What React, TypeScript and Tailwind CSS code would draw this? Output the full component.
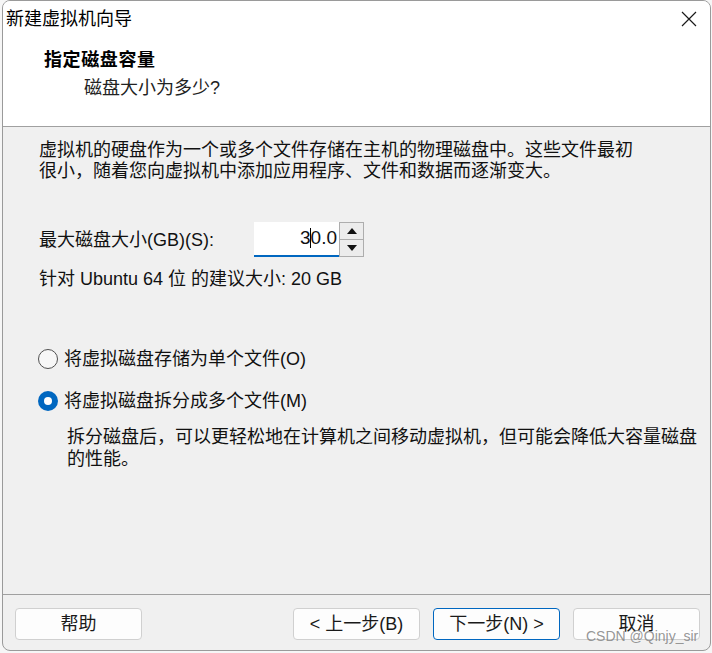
import React from "react";

const font = { fontFamily: '"Liberation Sans", "Noto Sans CJK SC", sans-serif' };

function Radio({ checked }: { checked: boolean }) {
  if (checked) {
    return (
      <div className="w-[20px] h-[20px] rounded-full bg-[#0067c0] flex items-center justify-center shrink-0">
        <div className="w-[8px] h-[8px] rounded-full bg-white" />
      </div>
    );
  }
  return <div className="w-[20px] h-[20px] rounded-full border border-[#505050] bg-[#f7f7f7] shrink-0" />;
}

function Btn({ children, focus }: { children: React.ReactNode; focus?: boolean }) {
  return (
    <div
      className={
        "w-[127px] h-[32px] rounded-[4px] bg-[#fdfdfd] flex items-center justify-center text-[18px] text-[#1a1a1a] border " +
        (focus ? "border-[#0067c0]" : "border-[#d0d0d0]")
      }
    >
      {children}
    </div>
  );
}

export default function App() {
  return (
    <div className="w-[712px] h-[653px] bg-[#f6f6f6] relative overflow-hidden" style={font}>
      <div className="ml-[2px] w-[709px] h-[651px] border border-[#9a9a9a] rounded-[8px] overflow-hidden bg-[#f0f0f0] flex flex-col">
        {/* header */}
        <div className="h-[126px] bg-white border-b border-[#a0a0a0] shrink-0">
          <div className="h-[35px] flex items-center justify-between pl-[3px] pr-[13px]">
            <span className="text-[18px] text-black leading-none">新建虚拟机向导</span>
            <svg width="16" height="16" viewBox="0 0 16 16" className="mt-[1px]">
              <path d="M1 1L15 15M15 1L1 15" stroke="#1a1a1a" strokeWidth="1.2" />
            </svg>
          </div>
          <div className="mt-[12px] ml-[41px] h-[24px] leading-[24px] text-[18px] font-bold text-black tracking-[0.6px]">
            指定磁盘容量
          </div>
          <div className="mt-[4px] ml-[81px] h-[24px] leading-[24px] text-[18px] text-[#222]">磁盘大小为多少?</div>
        </div>

        {/* body */}
        <div className="flex-1 pt-[13px] pl-[36px] text-[18px] text-[#111]">
          <div className="leading-[21px] whitespace-nowrap">
            虚拟机的硬盘作为一个或多个文件存储在主机的物理磁盘中。这些文件最初
            <br />
            很小，随着您向虚拟机中添加应用程序、文件和数据而逐渐变大。
          </div>

          <div className="mt-[40px] h-[35px] flex items-center">
            <div className="w-[215px] leading-none">最大磁盘大小(GB)(S):</div>
            <div className="w-[85px] h-[35px] bg-white border-b-2 border-[#0067c0] flex items-center justify-end pr-[2px] relative">
              <span className="text-[19px] leading-none">
                3<span className="inline-block w-[1px] h-[20px] bg-black align-middle -mx-[0.5px] mb-[2px]" />0.0
              </span>
            </div>
            <div className="w-[25px] h-[35px] flex flex-col border border-[#adadad] bg-[#ececec]">
              <div className="flex-1 flex items-center justify-center border-b border-[#adadad]">
                <svg width="10" height="6" viewBox="0 0 10 6">
                  <path d="M0 6L5 0L10 6Z" fill="#111" />
                </svg>
              </div>
              <div className="flex-1 flex items-center justify-center">
                <svg width="10" height="6" viewBox="0 0 10 6">
                  <path d="M0 0L10 0L5 6Z" fill="#111" />
                </svg>
              </div>
            </div>
          </div>

          <div className="mt-[12px] leading-[21px]">针对 Ubuntu 64 位 的建议大小: 20 GB</div>

          <div className="mt-[57px] h-[24px] flex items-center gap-[6px] -ml-[1px]">
            <Radio checked={false} />
            <span className="leading-none">将虚拟磁盘存储为单个文件(O)</span>
          </div>
          <div className="mt-[18px] h-[24px] flex items-center gap-[6px] -ml-[1px]">
            <Radio checked={true} />
            <span className="leading-none">将虚拟磁盘拆分成多个文件(M)</span>
          </div>
          <div className="mt-[13px] ml-[28px] leading-[22px] whitespace-nowrap">
            拆分磁盘后，可以更轻松地在计算机之间移动虚拟机，但可能会降低大容量磁盘
            <br />
            的性能。
          </div>
        </div>

        {/* footer */}
        <div className="h-[56px] border-t border-[#a0a0a0] shrink-0 pt-[13px] pl-[12px] pr-[10px] flex items-start">
          <Btn>帮助</Btn>
          <div className="flex-1" />
          <div className="flex gap-[13px]">
            <Btn>&lt; 上一步(B)</Btn>
            <Btn focus>下一步(N) &gt;</Btn>
            <Btn>取消</Btn>
          </div>
        </div>
      </div>
      <div className="absolute left-[586px] top-[629px] text-[14px] leading-none text-[#8a8a8a]/90 whitespace-nowrap">
        CSDN @Qinjy_sir
      </div>
    </div>
  );
}
